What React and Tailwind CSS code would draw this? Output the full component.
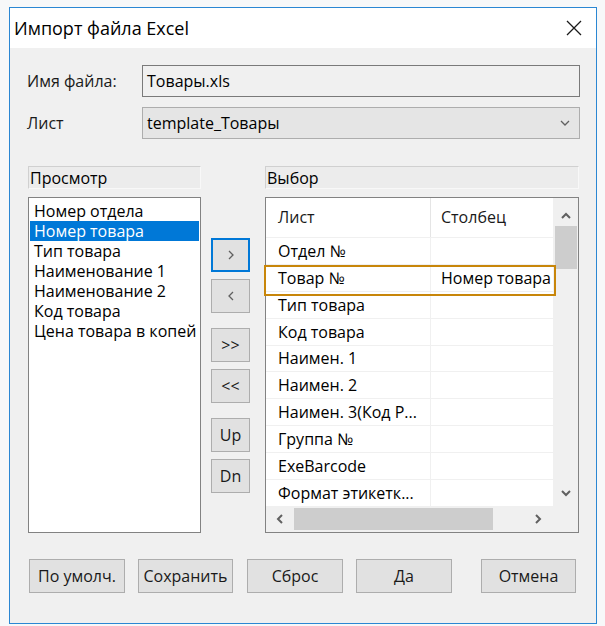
import React from 'react';

const leftItems = [
  'Номер отдела',
  'Номер товара',
  'Тип товара',
  'Наименование 1',
  'Наименование 2',
  'Код товара',
  'Цена товара в копей',
];

const rows = [
  ['Отдел №', ''],
  ['Товар №', 'Номер товара'],
  ['Тип товара', ''],
  ['Код товара', ''],
  ['Наимен. 1', ''],
  ['Наимен. 2', ''],
  ['Наимен. 3(Код P...', ''],
  ['Группа №', ''],
  ['ExeBarcode', ''],
  ['Формат этикетк...', ''],
];

const Chevron = ({ dir, w = 2 }) => {
  const pts = {
    up: '2,8 6,4 10,8',
    down: '2,4 6,8 10,4',
    left: '8,2 4,6 8,10',
    right: '4,2 8,6 4,10',
  }[dir];
  return (
    <svg width="12" height="12" viewBox="0 0 12 12">
      <polyline points={pts} fill="none" stroke="#606060" strokeWidth={w} />
    </svg>
  );
};

const SideButton = ({ children, focused }) => (
  <div
    className={`w-[39px] h-[34px] flex items-center justify-center text-[16px] text-[#1a1a1a] bg-[#e1e1e1] ${
      focused ? 'border-2 border-[#0078d7]' : 'border border-[#adadad]'
    }`}
  >
    {children}
  </div>
);

const FootButton = ({ children, w }) => (
  <div
    className={`${w} h-[34px] flex items-center justify-center text-[16px] text-[#1a1a1a] bg-[#e1e1e1] border border-[#adadad]`}
  >
    {children}
  </div>
);

const App = () => {
  return (
    <div
      className="w-[605px] h-[626px] bg-[#f7f8f9] pl-[9px] pt-[7px] overflow-hidden"
      style={{ fontFamily: '"Open Sans", "Liberation Sans", sans-serif' }}
    >
      <div className="w-[588px] h-[617px] border border-[#2b87d3] flex flex-col bg-[#f0f0f0]">
        {/* title bar */}
        <div className="h-[40px] bg-white flex items-center justify-between pl-[4px] pr-[14px]">
          <span className="text-[18px] text-black">Импорт файла Excel</span>
          <svg width="16" height="16" viewBox="0 0 16 16">
            <path d="M1 1 L15 15 M15 1 L1 15" stroke="#1a1a1a" strokeWidth="1.3" fill="none" />
          </svg>
        </div>

        <div className="flex-1 flex flex-col pl-[17px] pt-[17px]">
          {/* file name */}
          <div className="flex items-center h-[32px]">
            <span className="w-[115px] text-[16px] text-[#1a1a1a]">Имя файла:</span>
            <div className="w-[438px] h-[32px] border border-[#7a7a7a] bg-[#f0f0f0] flex items-center pl-[4px] text-[16px] text-black">
              Товары.xls
            </div>
          </div>
          {/* sheet */}
          <div className="flex items-center h-[32px] mt-[10px]">
            <span className="w-[115px] text-[16px] text-[#1a1a1a]">Лист</span>
            <div className="w-[438px] h-[32px] border border-[#adadad] bg-[#e5e5e5] flex items-center justify-between pl-[4px] pr-[8px] text-[16px] text-black">
              <span>template_Товары</span>
              <Chevron dir="down" w={1.3} />
            </div>
          </div>

          {/* panels */}
          <div className="flex mt-[27px] pl-[1px]">
            {/* left */}
            <div className="w-[173px] flex flex-col">
              <div className="h-[23px] border border-[#d0d0d0] border-b-[#f8f8f8] border-r-[#f8f8f8] bg-[#ececec] flex items-center pl-[1px] text-[16px] text-black">
                Просмотр
              </div>
              <div className="mt-[8px] h-[336px] border border-[#828282] bg-white pt-[3px] overflow-hidden">
                {leftItems.map((t, i) => (
                  <div
                    key={t}
                    className={`h-[20px] leading-[20px] mx-[1px] pl-[4px] text-[16px] whitespace-nowrap ${
                      i === 1 ? 'bg-[#0078d7] text-white' : 'text-black'
                    }`}
                  >
                    {t}
                  </div>
                ))}
              </div>
            </div>

            {/* middle buttons */}
            <div className="ml-[10px] w-[39px] flex flex-col pt-[72px]">
              <SideButton focused>
                <Chevron dir="right" w={1.3} />
              </SideButton>
              <div className="mt-[7px]">
                <SideButton>
                  <Chevron dir="left" w={1.3} />
                </SideButton>
              </div>
              <div className="mt-[15px]">
                <SideButton>&gt;&gt;</SideButton>
              </div>
              <div className="mt-[7px]">
                <SideButton>&lt;&lt;</SideButton>
              </div>
              <div className="mt-[15px]">
                <SideButton>Up</SideButton>
              </div>
              <div className="mt-[7px]">
                <SideButton>Dn</SideButton>
              </div>
            </div>

            {/* right */}
            <div className="ml-[15px] w-[314px] flex flex-col">
              <div className="h-[23px] border border-[#d0d0d0] border-b-[#f8f8f8] border-r-[#f8f8f8] bg-[#ececec] flex items-center pl-[1px] text-[16px] text-black">
                Выбор
              </div>
              <div className="relative mt-[8px] h-[336px] border border-[#828282] bg-white flex flex-col">
                <div className="flex flex-1 min-h-0">
                  <div className="flex-1 min-w-0 flex flex-col">
                    <div className="h-[39px] flex items-center text-[16px] text-[#1a1a1a]">
                      <span className="w-[165px] shrink-0 pl-[12px] border-r border-[#e5e5e5] h-full flex items-center">Лист</span>
                      <span className="pl-[10px]">Столбец</span>
                    </div>
                    {rows.map(([a, b]) => (
                      <div key={a} className="h-[27px] flex border-t border-[#f0f0f0] text-[16px] text-black">
                        <span className="w-[165px] shrink-0 pl-[12px] border-r border-[#f0f0f0] flex items-center whitespace-nowrap">
                          {a}
                        </span>
                        <span className="flex-1 min-w-0 pl-[10px] flex items-center whitespace-nowrap overflow-hidden">{b}</span>
                      </div>
                    ))}
                  </div>
                  {/* vertical scrollbar */}
                  <div className="w-[25px] shrink-0 bg-[#f0f0f0] flex flex-col items-center">
                    <div className="h-[28px] flex items-center justify-center pt-[8px]">
                      <Chevron dir="up" />
                    </div>
                    <div className="w-[22px] h-[43px] bg-[#cdcdcd]" />
                    <div className="flex-1" />
                    <div className="h-[26px] flex items-center justify-center">
                      <Chevron dir="down" />
                    </div>
                  </div>
                </div>
                {/* horizontal scrollbar */}
                <div className="h-[26px] bg-[#f0f0f0] flex items-center">
                  <div className="w-[28px] flex justify-center">
                    <Chevron dir="left" />
                  </div>
                  <div className="w-[199px] h-[22px] bg-[#cdcdcd]" />
                  <div className="w-[39px]" />
                  <Chevron dir="right" />
                </div>
                {/* highlight frame */}
                <div className="absolute left-[-2px] top-[67px] w-[292px] h-[31px] border-2 border-[#c8860a]" />
              </div>
            </div>
          </div>

          {/* bottom buttons */}
          <div className="flex mt-[26px] pl-[2px]">
            <FootButton w="w-[96px]">По умолч.</FootButton>
            <div className="ml-[13px]">
              <FootButton w="w-[95px]">Сохранить</FootButton>
            </div>
            <div className="ml-[14px]">
              <FootButton w="w-[96px]">Сброс</FootButton>
            </div>
            <div className="ml-[13px]">
              <FootButton w="w-[96px]">Да</FootButton>
            </div>
            <div className="ml-[29px]">
              <FootButton w="w-[95px]">Отмена</FootButton>
            </div>
          </div>
        </div>
      </div>
    </div>
  );
};

export default App;
